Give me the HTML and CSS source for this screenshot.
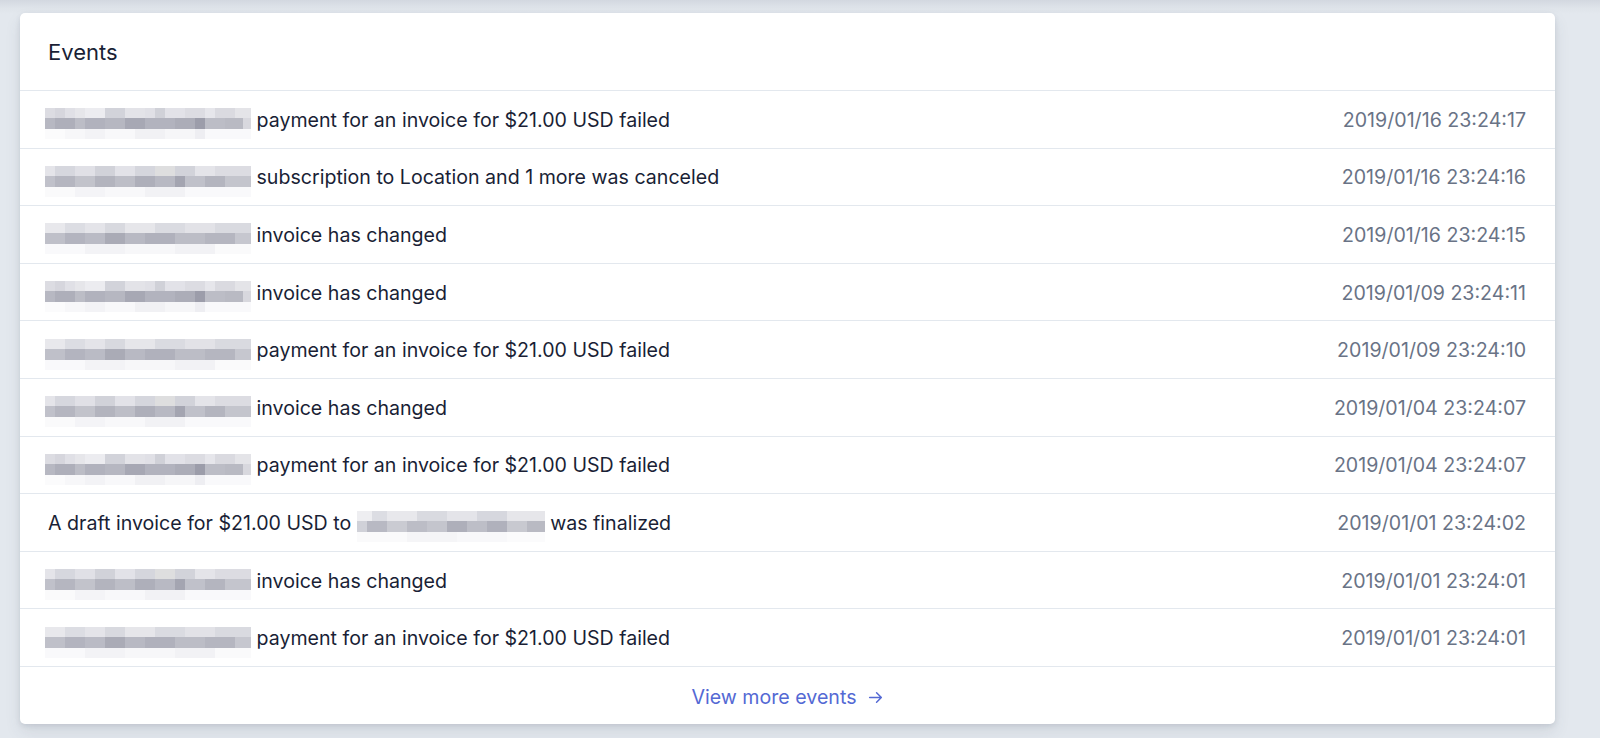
FILE: index.html
```html
<!DOCTYPE html>
<html lang="en">
<head>
<meta charset="utf-8">
<title>Events</title>
<link rel="stylesheet" href="styles.css">
</head>
<body>
<div class="page">
  <section class="card">
    <header class="card-header">Events</header>
    <ul class="events">
      <li class="event"><span class="desc"><span class="blur b1"></span> payment for an invoice for $21.00 USD failed</span><span class="time">2019/01/16 23:24:17</span></li>
      <li class="event"><span class="desc"><span class="blur b2"></span> subscription to Location and 1 more was canceled</span><span class="time">2019/01/16 23:24:16</span></li>
      <li class="event"><span class="desc"><span class="blur b3"></span> invoice has changed</span><span class="time">2019/01/16 23:24:15</span></li>
      <li class="event"><span class="desc"><span class="blur b1"></span> invoice has changed</span><span class="time">2019/01/09 23:24:11</span></li>
      <li class="event"><span class="desc"><span class="blur b3"></span> payment for an invoice for $21.00 USD failed</span><span class="time">2019/01/09 23:24:10</span></li>
      <li class="event"><span class="desc"><span class="blur b2"></span> invoice has changed</span><span class="time">2019/01/04 23:24:07</span></li>
      <li class="event"><span class="desc"><span class="blur b1"></span> payment for an invoice for $21.00 USD failed</span><span class="time">2019/01/04 23:24:07</span></li>
      <li class="event"><span class="desc">A draft invoice for $21.00 USD to <span class="blur b4"></span> was finalized</span><span class="time">2019/01/01 23:24:02</span></li>
      <li class="event"><span class="desc"><span class="blur b2"></span> invoice has changed</span><span class="time">2019/01/01 23:24:01</span></li>
      <li class="event"><span class="desc"><span class="blur b3"></span> payment for an invoice for $21.00 USD failed</span><span class="time">2019/01/01 23:24:01</span></li>
    </ul>
    <footer class="card-footer">
      <a class="more" href="#">View more events <svg class="arrow" width="17" height="17" viewBox="0 0 16 16" fill="none" stroke="currentColor" stroke-width="1.4" stroke-linecap="round" stroke-linejoin="round"><path d="M2.5 8h11M9 3.5 13.5 8 9 12.5"/></svg></a>
    </footer>
  </section>
</div>
</body>
</html>
```

FILE: styles.css
```css
* { box-sizing: border-box; }
html, body { margin: 0; padding: 0; }
body {
  background: #e3e8ee linear-gradient(to bottom, #d3d8e0 0px, #dfe4ea 8px, #e3e8ee 14px) no-repeat;
  font-family: Inter, "Noto Sans", "Liberation Sans", sans-serif;
  color: #1a1f36;
  height: 738px;
  overflow: hidden;
}
.page {
  padding: 13px 45px 0 20px;
}
.card {
  background: #fff;
  border-radius: 5px;
  box-shadow: 0 2px 5px rgba(60, 66, 87, 0.12), 0 8px 16px rgba(60, 66, 87, 0.10);
  overflow: hidden;
}
.card-header {
  height: 77px;
  display: flex;
  align-items: center;
  padding: 1px 29px 0 28px;
  font-size: 22px;
  font-weight: 400;
  color: #1a1f36;
}
.events {
  list-style: none;
  margin: 0;
  padding: 0;
}
.event {
  height: 57.6px;
  border-top: 1px solid #e3e8ee;
  display: flex;
  align-items: center;
  justify-content: space-between;
  padding: 1px 29px 0 28px;
  font-size: 19.6px;
}
.desc {
  display: flex;
  align-items: center;
  white-space: pre;
}
.time {
  color: #697386;
}
.blur {
  display: inline-block;
  width: 206px;
  height: 31px;
  margin-top: 8px;
  margin-left: -3px;
  background-repeat: no-repeat;
  background-size: 100% 10px, 100% 11px, 100% 10px;
  background-position: 0 0, 0 10px, 0 21px;
}
.b1 {
  background-image:
    linear-gradient(to right, #dcdce2 0 10px, #d6d6dd 10px 20px, #e0e0e6 20px 30px, #e6e6ea 30px 40px, #ececf0 40px 60px, #d2d3da 60px 80px, #e3e3e8 80px 100px, #e0e0e6 100px 110px, #d0d1d8 110px 120px, #e2e2e8 120px 140px, #dcdce2 140px 160px, #e6e6eb 160px 170px, #dadae0 170px 190px, #e4e4e8 190px 206px),
    linear-gradient(to right, #b7b8c2 0 10px, #aeafba 10px 30px, #bcbdc6 30px 40px, #b1b2bd 40px 60px, #b6b7c1 60px 80px, #a7a8b4 80px 100px, #b2b3be 100px 130px, #acadb8 130px 150px, #9c9daa 150px 160px, #bcbdc6 160px 180px, #b9bac3 180px 198px, #d8d8de 198px 206px),
    linear-gradient(to right, #fbfbfc 0 20px, #f7f7f9 20px 40px, #f3f3f6 40px 60px, #f8f8fa 60px 90px, #f1f1f4 90px 120px, #f6f6f8 120px 150px, #eeeef2 150px 160px, #f9f9fb 160px 206px);
}
.b2 {
  background-image:
    linear-gradient(to right, #e4e4e9 0 10px, #d6d7de 10px 30px, #e0e0e6 30px 50px, #d1d2d9 50px 70px, #e2e2e8 70px 90px, #d5d6dd 90px 110px, #dededf 110px 130px, #d2d3da 130px 150px, #e4e4e9 150px 170px, #dcdce2 170px 206px),
    linear-gradient(to right, #c0c1ca 0 10px, #b5b6c0 10px 30px, #c2c3cb 30px 50px, #b3b4be 50px 70px, #bdbec7 70px 90px, #aeafba 90px 110px, #b8b9c3 110px 130px, #a4a5b1 130px 140px, #c0c1ca 140px 160px, #b4b5bf 160px 180px, #c4c5cd 180px 206px),
    linear-gradient(to right, #fafafb 0 30px, #f4f4f7 30px 60px, #f8f8fa 60px 100px, #f2f2f5 100px 140px, #f9f9fb 140px 206px);
}
.b3 {
  background-image:
    linear-gradient(to right, #e8e8ec 0 20px, #dcdde3 20px 40px, #e4e4e9 40px 60px, #d8d9df 60px 80px, #e6e6ea 80px 110px, #dadbe1 110px 140px, #e2e2e7 140px 170px, #d9dae0 170px 206px),
    linear-gradient(to right, #bfc0c9 0 20px, #b3b4bf 20px 40px, #babbc5 40px 60px, #aaabb6 60px 80px, #b8b9c3 80px 100px, #b0b1bc 100px 130px, #bcbdc6 130px 160px, #b5b6c0 160px 190px, #c6c7cf 190px 206px),
    linear-gradient(to right, #f9f9fb 0 40px, #f3f3f6 40px 80px, #f7f7f9 80px 130px, #f2f2f5 130px 170px, #fafafb 170px 206px);
}
.b4 {
  width: 188px;
  margin-left: 0;
  background-image:
    linear-gradient(to right, #eeeef1 0 15px, #dcdde3 15px 30px, #e8e8ec 30px 60px, #d9dae0 60px 90px, #e4e4e9 90px 120px, #d6d7de 120px 150px, #e6e6ea 150px 188px),
    linear-gradient(to right, #d0d1d8 0 10px, #b8b9c3 10px 30px, #cacbd2 30px 50px, #bcbdc6 50px 70px, #c4c5cd 70px 90px, #aeafba 90px 110px, #bdbec7 110px 130px, #b0b1bc 130px 150px, #c8c9d0 150px 170px, #b9bac3 170px 188px),
    linear-gradient(to right, #fafafb 0 50px, #f5f5f7 50px 100px, #f8f8fa 100px 150px, #fbfbfc 150px 188px);
}
.card-footer {
  height: 57.6px;
  border-top: 1px solid #e3e8ee;
  display: flex;
  align-items: center;
  justify-content: center;
  padding-top: 3px;
}
.more {
  color: #5469d4;
  text-decoration: none;
  font-size: 19.6px;
  display: inline-flex;
  align-items: center;
  gap: 10px;
}
.arrow {
  display: block;
  margin-top: 1px;
}
```
